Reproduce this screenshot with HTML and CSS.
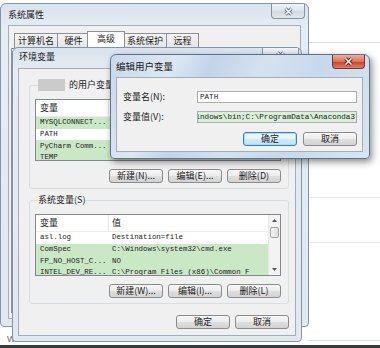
FILE: index.html
```html
<!DOCTYPE html>
<html>
<head>
	<meta charset="UTF-8">
	<title>编辑用户变量</title>
	<link rel="stylesheet" href="styles.css">
</head>
<body>
<div class="desk">
	<div class="rule r1"></div>
	<div class="rule r2"></div>
	<div class="rule r3"></div>
	<div class="rule r4"></div>
	<div class="behind">W</div>
	<div class="taskbar"></div>

	<!-- 系统属性 -->
	<div class="win sys">
		<div class="bar">
			<span class="title">系统属性</span>
			<span class="close"><svg class="x" width="11" height="9" viewBox="0 0 11 9"><path class="xo" d="M2.5 1.5l6 6m0-6l-6 6"/><path class="xi" d="M2.5 1.5l6 6m0-6l-6 6"/></svg></span>
		</div>
		<div class="client">
			<div class="tabs">
				<span class="tab">计算机名</span>
				<span class="tab">硬件</span>
				<span class="tab on">高级</span>
				<span class="tab">系统保护</span>
				<span class="tab">远程</span>
			</div>
			<div class="panel"></div>
		</div>
	</div>

	<!-- 环境变量 -->
	<div class="win env">
		<div class="bar">
			<span class="title">环境变量</span>
			<span class="close"><svg class="x" width="11" height="9" viewBox="0 0 11 9"><path class="xo" d="M2.5 1.5l6 6m0-6l-6 6"/><path class="xi" d="M2.5 1.5l6 6m0-6l-6 6"/></svg></span>
		</div>
		<div class="client">
			<fieldset class="group">
				<legend><span class="user"></span>的用户变量(U)</legend>
				<div class="list">
					<div class="rows">
						<div class="row head"><span>变量</span><span>值</span></div>
						<div class="row g"><span>MYSQLCONNECT...</span><span></span></div>
						<div class="row"><span>PATH</span><span></span></div>
						<div class="row g"><span>PyCharm Comm...</span><span></span></div>
						<div class="row g"><span>TEMP</span><span></span></div>
					</div>
				</div>
				<div class="btns">
					<button class="btn">新建(N)...</button>
					<button class="btn">编辑(E)...</button>
					<button class="btn">删除(D)</button>
				</div>
			</fieldset>

			<fieldset class="group">
				<legend>系统变量(S)</legend>
				<div class="list">
					<div class="rows">
						<div class="row head"><span>变量</span><span>值</span></div>
						<div class="row"><span>asl.log</span><span>Destination=file</span></div>
						<div class="row g"><span>ComSpec</span><span>C:\Windows\system32\cmd.exe</span></div>
						<div class="row g"><span>FP_NO_HOST_C...</span><span>NO</span></div>
						<div class="row g"><span>INTEL_DEV_RE...</span><span>C:\Program Files (x86)\Common F</span></div>
					</div>
					<div class="vscroll">
						<span class="arrow"><svg width="5" height="3" viewBox="0 0 5 3"><path d="M0 3L2.5 0L5 3z"/></svg></span>
						<span class="thumb"></span>
						<span class="track"></span>
						<span class="arrow"><svg width="5" height="3" viewBox="0 0 5 3"><path d="M0 0L2.5 3L5 0z"/></svg></span>
					</div>
				</div>
				<div class="btns">
					<button class="btn">新建(W)...</button>
					<button class="btn">编辑(I)...</button>
					<button class="btn">删除(L)</button>
				</div>
			</fieldset>

			<div class="btns foot">
				<button class="btn">确定</button>
				<button class="btn">取消</button>
			</div>
		</div>
	</div>

	<!-- 编辑用户变量 -->
	<div class="win edit">
		<div class="bar">
			<span class="title">编辑用户变量</span>
			<span class="close red"><svg class="x" width="11" height="9" viewBox="0 0 11 9"><path class="xo" d="M2.5 1.5l6 6m0-6l-6 6"/><path class="xi" d="M2.5 1.5l6 6m0-6l-6 6"/></svg></span>
		</div>
		<div class="client form">
			<label>变量名(N):</label>
			<div class="field"><span>PATH</span></div>
			<label>变量值(V):</label>
			<div class="field val"><span>C:\Windows\bin;C:\ProgramData\Anaconda3</span></div>
			<div class="btns dlg">
				<button class="btn def">确定</button>
				<button class="btn">取消</button>
			</div>
		</div>
	</div>
</div>
</body>
</html>
```

FILE: styles.css
```css
* { box-sizing: border-box; }
body { margin: 0; background: #fff; color: #1c1c1c;
	font: 9px/12px "Noto Sans CJK SC", sans-serif; }
.desk { position: relative; width: 380px; height: 348px; overflow: hidden; }

/* page behind the windows */
.rule { position: absolute; left: 308px; right: 0; height: 1px; background: #dcdcdc; }
.r1 { top: 42px; }
.r2 { top: 197px; background: #e6e6e6; }
.r3 { top: 242px; background: #e6e6e6; }
.r4 { top: 340px; }
.behind { position: absolute; left: 7px; top: 334px; color: #666; font: 9px "Liberation Sans", sans-serif; }
.taskbar { position: absolute; left: 0; right: 0; top: 345px; height: 3px; background: #363b41; }

/* windows */
.win { position: absolute; display: flex; flex-direction: column;
	border: 1px solid #8594a6; border-radius: 6px 6px 4px 4px;
	background: linear-gradient(180deg, #d9e3ee, #e6ecf3 24px, #e2e8ef); }
.bar { display: flex; align-items: flex-start; flex: none; }
.title { padding-top: 5px; color: #202020; }
.close { margin-left: auto; display: flex; align-items: center; justify-content: center;
	border: 1px solid #8593a5; border-top: 0; border-radius: 0 0 4px 4px;
	background: linear-gradient(180deg, #f0f3f7, #dce3eb 50%, #cfd8e2 51%, #e1e7ee); }
.xo { fill: none; stroke: #6e7b8b; stroke-width: 3.4; }
.xi { fill: none; stroke: #fbfcfd; stroke-width: 1.5; }
.client { flex: 1; background: #f0f0f0; border: 1px solid #a2aebc; }

.sys { left: 0; top: 3px; width: 309px; height: 324px; padding: 0 7px 7px; }
.sys .bar { height: 21px; }
.sys .close { width: 34px; height: 15px; margin-right: -4px; }
.sys .client { display: flex; flex-direction: column; padding: 5px 5px 5px 2px; }
.tabs { display: flex; align-items: flex-end; height: 17px; padding-left: 3px; }
.tab { height: 15px; min-width: 33px; padding: 0 3px; margin-right: -1px; text-align: center;
	border: 1px solid #8c9099; border-bottom: 0; line-height: 14px;
	background: linear-gradient(180deg, #f4f4f4, #e4e4e4); }
.tab.on { height: 17px; min-width: 38px; margin: 0 -2px 0 -2px; position: relative;
	background: #fff; padding-bottom: 2px; }
.panel { flex: 1; background: #fff; border: 1px solid #8c9099; }

.env { left: 12px; top: 47px; width: 290px; height: 295px; padding: 0 5px 5px; }
.env .bar { height: 20px; }
.env .title { padding-top: 3px; padding-left: 1px; }
.env .close { width: 37px; height: 16px; margin-right: -3px; }
.env .client { padding: 10px 6px 0 10px; display: flex; flex-direction: column; }

.group { margin: 0; padding: 8px 7px 5px 5px; border: 1px solid #d5dfe5; border-radius: 3px; min-width: 0; }
.group + .group { margin-top: 5px; }
.group legend { padding: 0; margin-left: 3px; display: flex; align-items: center; }
.user { display: inline-block; width: 27px; height: 12px; margin-right: 4px;
	background: #cbcbcb; border-radius: 1px; }

.list { display: flex; height: 62px; border: 1px solid #828790; background: #fff; overflow: hidden; }
.rows { flex: 1; min-width: 0; }
.row { display: grid; grid-template-columns: 72px 1fr; height: 11.7px; align-items: center;
	font: 7.4px/11px "Liberation Mono", monospace; white-space: nowrap; }
.row span { padding-left: 4px; overflow: hidden; }
.row.head { height: 17px; font: 9px/16px "Noto Sans CJK SC", sans-serif;
	border-bottom: 1px solid #ececec; }
.row.head span + span { border-left: 1px solid #e8e8e8; padding-left: 3px; }
.row.g { background: #cbe8c6; }
.vscroll { width: 12px; flex: none; display: flex; flex-direction: column; align-items: center;
	background: #f3f3f3; border-left: 1px solid #e8e8e8; }
.arrow { height: 11px; display: flex; align-items: center; justify-content: center; fill: #555; }
.thumb { width: 9px; height: 11px; margin-top: 1px; border: 1px solid #a3a3a3; border-radius: 2px;
	background: linear-gradient(90deg, #f4f4f4, #dedede); }
.track { flex: 1; }

.btns { display: flex; justify-content: flex-end; gap: 5px; margin-top: 8px; }
.btn { width: 54px; height: 14px; padding: 0; border: 1px solid #8a8b8c; border-radius: 3px;
	font: 9px/12px "Noto Sans CJK SC", sans-serif; color: #1c1c1c;
	background: linear-gradient(180deg, #f7f7f7, #ececec 50%, #dfdfdf 51%, #d3d3d3); }
.foot { margin-top: 11px; }

.edit { left: 110px; top: 54px; width: 260px; height: 105px; padding: 0 6px 6px 5px;
	border-color: #5e7189; box-shadow: 2px 3px 7px rgba(0, 0, 0, 0.45);
	background: linear-gradient(115deg, #c9d9ea 0%, #dce7f3 22%, #c3d4e8 34%, #d4e2f0 52%, #c8d9ec 70%, #d8e5f2 100%); }
.edit .bar { height: 22px; }
.edit .title { padding-top: 5px; padding-left: 0; font-size: 9.5px; }
.close.red { width: 33px; height: 14px; margin-right: -2px; border-color: #7f3526;
	background: linear-gradient(180deg, #eeb0a0, #dc7058 50%, #c8402a 51%, #d9806a); }
.red .xo { stroke: #5c2317; }
.form { display: grid; grid-template-columns: 74px 160px; row-gap: 8px; align-items: center;
	align-content: start; padding: 13px 0 0 6px; }
.field { height: 12px; border: 1px solid #abadb3; background: #fff; display: flex;
	align-items: center; overflow: hidden; white-space: nowrap;
	font: 7.6px "Liberation Mono", monospace; padding-left: 2px; }
.field.val { justify-content: flex-end; padding: 0 1px 0 0; background: #d8efd8; }
.btns.dlg { grid-column: 1 / 3; margin-top: 1px; gap: 6px; }
.btns.dlg .btn { width: 54px; }
.btn.def { border-color: #3c7fb1; box-shadow: inset 0 0 0 1px #a8dcf7;
	background: linear-gradient(180deg, #f2f9fe, #e3f3fd 50%, #cfeafb 51%, #c2e4f8); }
```
